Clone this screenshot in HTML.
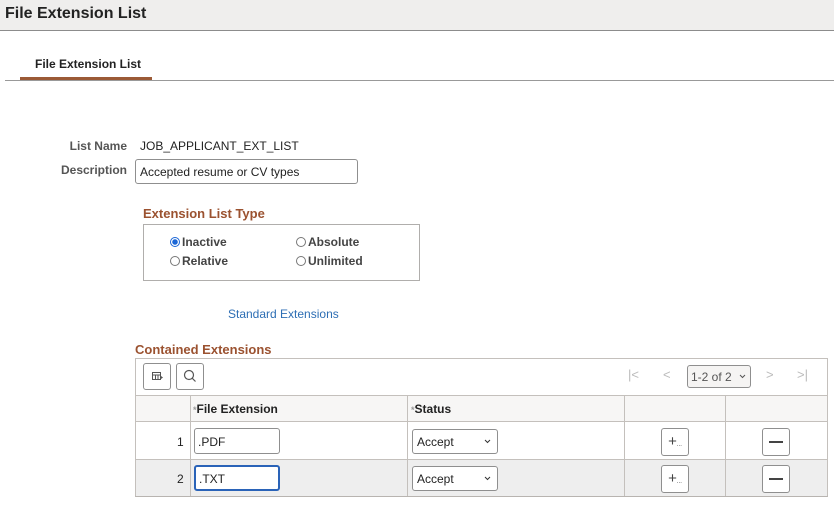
<!DOCTYPE html>
<html><head><style>
*{box-sizing:border-box;margin:0;padding:0}
body{width:834px;height:506px;background:#fff;font-family:"Liberation Sans",Arial,sans-serif;font-size:12px;color:#333;position:relative;overflow:hidden}
.a{position:absolute}
.hdr{left:0;top:0;width:834px;height:31px;background:#efeeed;border-bottom:1px solid #8c8c8c}
.title{left:5px;top:5px;font-size:16px;font-weight:bold;color:#222}
.lbl{font-weight:bold;color:#555;text-align:right}
.inp{border:1px solid #8f8f8f;border-radius:3px;background:#fff;padding:5px 4px;font-size:12px;color:#222}
.sec{color:#9b5230;font-weight:bold;font-size:13px}
.rad{display:inline-block;width:10px;height:10px;border:1px solid #777;border-radius:50%;vertical-align:-1px;margin-right:2px;background:#fff}
.rad.on{border-color:#1a66d6;background:radial-gradient(circle,#1a66d6 2.5px,#fff 3px)}
.rl{font-weight:bold;color:#444}
.btn{border:1px solid #8f8f8f;border-radius:3px;background:#fff}
.sel{border:1px solid #8f8f8f;border-radius:3px;background:#fff;padding:5px 4px;font-size:12px;color:#222}
.chev{position:absolute;right:6px;top:9px}
</style></head><body>
<div class="a hdr"></div>
<div class="a title">File Extension List</div>
<div class="a" style="left:35px;top:57px;font-weight:bold;color:#222">File Extension List</div>
<div class="a" style="left:5px;top:80px;width:829px;height:1px;background:#999"></div>
<div class="a" style="left:20px;top:77px;width:132px;height:3px;background:#9b5a36"></div>

<div class="a lbl" style="left:40px;top:139px;width:87px">List Name</div>
<div class="a" style="left:140px;top:139px;color:#222">JOB_APPLICANT_EXT_LIST</div>
<div class="a lbl" style="left:40px;top:163px;width:87px">Description</div>
<div class="a inp" style="left:135px;top:159px;width:223px;height:25px">Accepted resume or CV types</div>

<div class="a sec" style="left:143px;top:206px">Extension List Type</div>
<div class="a" style="left:143px;top:224px;width:277px;height:57px;border:1px solid #b0aeac"></div>
<div class="a rl" style="left:170px;top:235px"><span class="rad on"></span>Inactive</div>
<div class="a rl" style="left:296px;top:235px"><span class="rad"></span>Absolute</div>
<div class="a rl" style="left:170px;top:254px"><span class="rad"></span>Relative</div>
<div class="a rl" style="left:296px;top:254px"><span class="rad"></span>Unlimited</div>
<div class="a" style="left:228px;top:307px;color:#2d6eb4">Standard Extensions</div>

<div class="a sec" style="left:135px;top:342px">Contained Extensions</div>
<div class="a" style="left:135px;top:358px;width:693px;height:139px;border:1px solid #c4c0bc;border-bottom:2px solid #b8b4b0"></div>
<div class="a btn" style="left:143px;top:363px;width:28px;height:27px"><svg width="26" height="25" viewBox="0 0 26 25"><g fill="none" stroke="#555" stroke-width="1"><rect x="8.5" y="8.5" width="8" height="7"/><path d="M8.5 11h8M11.5 11v4.5M14 11v4.5"/></g><path d="M17 12l2 1.5-2 1.5z" fill="#555"/></svg></div>
<div class="a btn" style="left:176px;top:363px;width:28px;height:27px"><svg width="26" height="25" viewBox="0 0 26 25"><circle cx="12" cy="11" r="4.5" fill="none" stroke="#555" stroke-width="1.2"/><path d="M15.3 14.3l3.2 3.2" stroke="#555" stroke-width="1.2"/></svg></div>
<div class="a" style="left:628px;top:367px;color:#bbb;font-size:13px">|&lt;</div>
<div class="a" style="left:663px;top:367px;color:#bbb;font-size:13px">&lt;</div>
<div class="a sel" style="left:687px;top:365px;width:64px;height:23px;background:#f5f4f3;color:#555;padding:4px 3px">1-2 of 2<svg class="chev" style="right:4px;top:8px" width="7" height="5"><path d="M1 1l2.5 2.5L6 1" fill="none" stroke="#555"/></svg></div>
<div class="a" style="left:766px;top:367px;color:#bbb;font-size:13px">&gt;</div>
<div class="a" style="left:797px;top:367px;color:#bbb;font-size:13px">&gt;|</div>

<div class="a" style="left:136px;top:395px;width:691px;height:27px;background:#f7f6f5;border-top:1px solid #c4c0bc;border-bottom:1px solid #c4c0bc"></div>
<div class="a" style="left:136px;top:459px;width:691px;height:37px;background:#eeeeee;border-top:1px solid #c4c0bc"></div>
<div class="a" style="left:190px;top:395px;width:1px;height:101px;background:#c4c0bc"></div>
<div class="a" style="left:407px;top:395px;width:1px;height:101px;background:#c4c0bc"></div>
<div class="a" style="left:624px;top:395px;width:1px;height:101px;background:#c4c0bc"></div>
<div class="a" style="left:725px;top:395px;width:1px;height:101px;background:#c4c0bc"></div>
<div class="a" style="left:193px;top:402px;font-weight:bold;color:#222"><span style="color:#999;font-size:9px">*</span>File Extension</div>
<div class="a" style="left:411px;top:402px;font-weight:bold;color:#222"><span style="color:#999;font-size:9px">*</span>Status</div>

<div class="a" style="left:177px;top:435px;color:#222">1</div>
<div class="a inp" style="left:194px;top:428px;width:86px;height:26px;padding:6px 3px">.PDF</div>
<div class="a sel" style="left:412px;top:429px;width:86px;height:25px">Accept<svg class="chev" width="7" height="5"><path d="M1 1l2.5 2.5L6 1" fill="none" stroke="#333"/></svg></div>
<div class="a btn" style="left:661px;top:428px;width:28px;height:28px;text-align:center;line-height:25px;font-size:15px;color:#444">+<span style="font-size:6px">...</span></div>
<div class="a btn" style="left:762px;top:428px;width:28px;height:28px"><div class="a" style="left:6px;top:12px;width:14px;height:2px;background:#444"></div></div>

<div class="a" style="left:177px;top:472px;color:#222">2</div>
<div class="a inp" style="left:194px;top:465px;width:86px;height:26px;padding:5px 3px;border:2px solid #2a63b8">.TXT</div>
<div class="a sel" style="left:412px;top:466px;width:86px;height:25px">Accept<svg class="chev" width="7" height="5"><path d="M1 1l2.5 2.5L6 1" fill="none" stroke="#333"/></svg></div>
<div class="a btn" style="left:661px;top:465px;width:28px;height:28px;text-align:center;line-height:25px;font-size:15px;color:#444">+<span style="font-size:6px">...</span></div>
<div class="a btn" style="left:762px;top:465px;width:28px;height:28px"><div class="a" style="left:6px;top:12px;width:14px;height:2px;background:#444"></div></div>
</body></html>
